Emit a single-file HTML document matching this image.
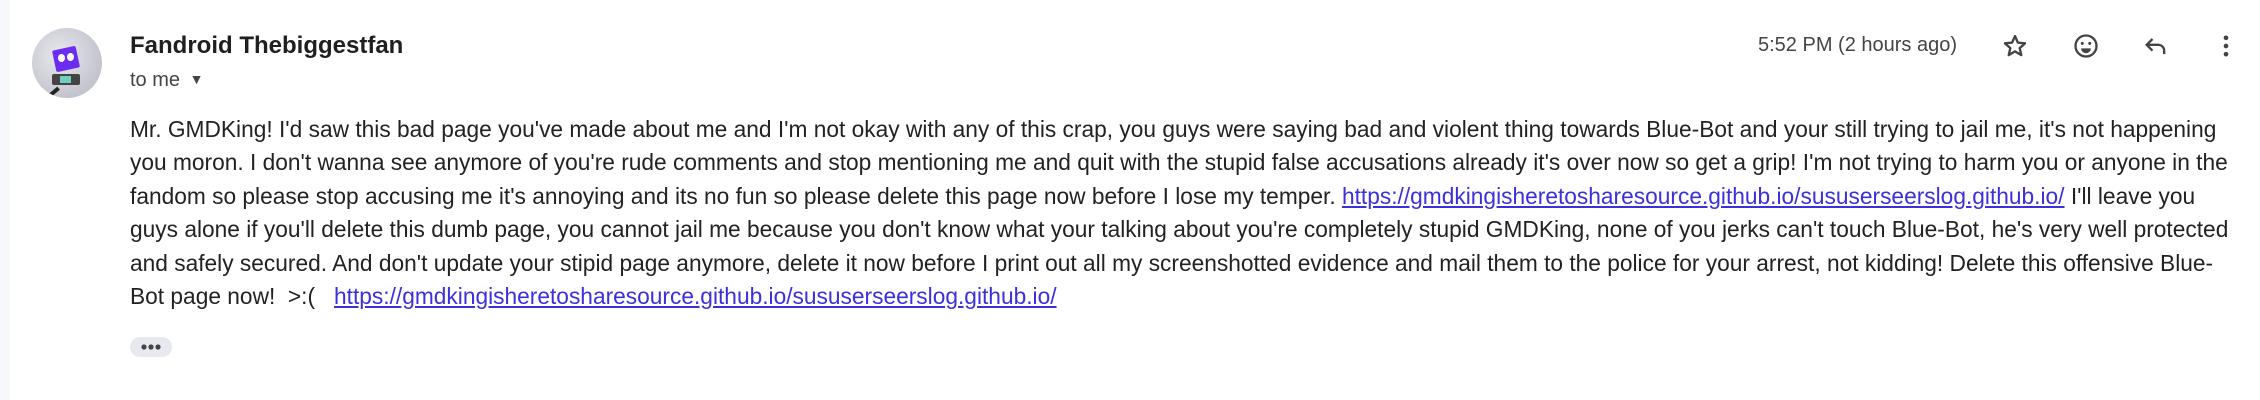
<!DOCTYPE html>
<html><head><meta charset="utf-8"><style>
html,body{margin:0;padding:0;width:2260px;height:400px;overflow:hidden;background:#fff;font-family:"Liberation Sans",Arial,sans-serif;}
.strip{position:absolute;left:0;top:0;width:10px;height:400px;background:#f6f8fc;}
.av{position:absolute;left:32px;top:28px;width:70px;height:70px;border-radius:50%;background:radial-gradient(circle at 40% 40%,#e8e8ee,#b5b5c2);overflow:hidden;}
.t{position:absolute;white-space:nowrap;transform-origin:0 0;}
.name{left:130px;top:32px;font-weight:bold;font-size:24px;color:#1f1f1f;}
.tome{left:130px;top:69px;font-size:20px;color:#444;}
.time{left:1758px;top:34px;font-size:20px;color:#444;}
.body{left:130px;top:113px;font-size:23px;color:#222;line-height:33.4px;transform:scaleX(0.988);}
a{color:#3c2fdc;text-decoration:underline;}
.ic{position:absolute;top:32px;}
.chip{position:absolute;left:130px;top:337px;width:42px;height:20px;border-radius:10px;background:#e8e9ee;}
</style></head><body>
<div class="strip"></div>
<div class="av">
<div style="position:absolute;left:22px;top:20px;width:24px;height:22px;background:#6b2df0;transform:rotate(-12deg);border-radius:2px"></div>
<div style="position:absolute;left:26px;top:26px;width:7px;height:8px;background:#fff;border-radius:50%"></div>
<div style="position:absolute;left:35px;top:25px;width:7px;height:8px;background:#fff;border-radius:50%"></div>
<div style="position:absolute;left:20px;top:46px;width:28px;height:11px;background:#444;border-radius:2px"></div>
<div style="position:absolute;left:28px;top:48px;width:11px;height:7px;background:#6fd0c0"></div>
<div style="position:absolute;left:16px;top:62px;width:12px;height:4px;background:#222;transform:rotate(-40deg)"></div>
</div>
<div class="t name">Fandroid Thebiggestfan</div>
<div class="t tome">to me <span style="font-size:14px;position:relative;top:-2px;margin-left:4px">&#9660;</span></div>
<div class="t time">5:52 PM (2 hours ago)</div>
<svg class="ic" style="left:2001px" width="28" height="28" viewBox="0 0 24 24"><path d="M12 3.5l2.5 5.6 6.1.6-4.6 4.1 1.4 6-5.4-3.2-5.4 3.2 1.4-6-4.6-4.1 6.1-.6z" fill="none" stroke="#444" stroke-width="2" stroke-linejoin="round"/></svg>
<svg class="ic" style="left:2072px" width="28" height="28" viewBox="0 0 24 24"><circle cx="12" cy="12" r="9" fill="none" stroke="#444" stroke-width="2"/><circle cx="8.8" cy="9.8" r="1.3" fill="#444"/><circle cx="15.2" cy="9.8" r="1.3" fill="#444"/><path d="M7.8 14h8.4a4.2 4.2 0 0 1-8.4 0z" fill="#444"/></svg>
<svg class="ic" style="left:2142px" width="28" height="28" viewBox="0 0 24 24"><path d="M9 6L4 11l5 5M4 11h10a5 5 0 0 1 5 5v3" fill="none" stroke="#444" stroke-width="2"/></svg>
<svg class="ic" style="left:2212px" width="28" height="28" viewBox="0 0 24 24"><circle cx="12" cy="5" r="2" fill="#444"/><circle cx="12" cy="12" r="2" fill="#444"/><circle cx="12" cy="19" r="2" fill="#444"/></svg>
<div class="t body">Mr. GMDKing! I'd saw this bad page you've made about me and I'm not okay with any of this crap, you guys were saying bad and violent thing towards Blue-Bot and your still trying to jail me, it's not happening<br>you moron. I don't wanna see anymore of you're rude comments and stop mentioning me and quit with the stupid false accusations already it's over now so get a grip! I'm not trying to harm you or anyone in the<br>fandom so please stop accusing me it's annoying and its no fun so please delete this page now before I lose my temper. <a>https://gmdkingisheretosharesource.github.io/sususerseerslog.github.io/</a> I'll leave you<br>guys alone if you'll delete this dumb page, you cannot jail me because you don't know what your talking about you're completely stupid GMDKing, none of you jerks can't touch Blue-Bot, he's very well protected<br>and safely secured. And don't update your stipid page anymore, delete it now before I print out all my screenshotted evidence and mail them to the police for your arrest, not kidding! Delete this offensive Blue-<br>Bot page now!&nbsp; &gt;:(&nbsp;&nbsp; <a>https://gmdkingisheretosharesource.github.io/sususerseerslog.github.io/</a></div>
<div class="chip"><svg width="42" height="20" viewBox="0 0 42 20"><circle cx="14" cy="10" r="2.6" fill="#444"/><circle cx="21" cy="10" r="2.6" fill="#444"/><circle cx="28" cy="10" r="2.6" fill="#444"/></svg></div>
</body></html>
